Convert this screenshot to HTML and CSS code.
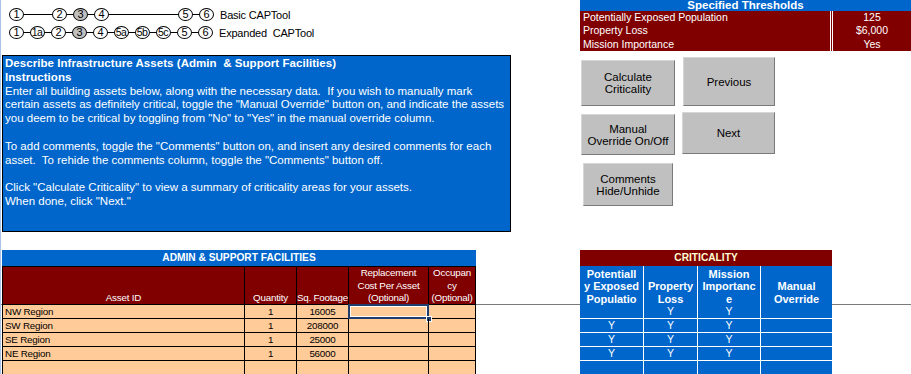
FILE: index.html
```html
<!DOCTYPE html>
<html>
<head>
<meta charset="utf-8">
<link rel="stylesheet" href="styles.css">
</head>
<body>
<div class="page">
  <div class="freeze-line"></div>
  <div class="top">
    <div class="left">
      <div class="steps">
        <div class="step-row">
          <span class="circ">1</span><span class="conn w28"></span>
          <span class="circ">2</span><span class="conn"></span>
          <span class="circ cur">3</span><span class="conn"></span>
          <span class="circ">4</span><span class="conn w69"></span>
          <span class="circ">5</span><span class="conn"></span>
          <span class="circ">6</span>
          <span class="step-label">Basic CAPTool</span>
        </div>
        <div class="step-row">
          <span class="circ">1</span><span class="conn"></span>
          <span class="circ two">1a</span><span class="conn"></span>
          <span class="circ">2</span><span class="conn"></span>
          <span class="circ cur">3</span><span class="conn"></span>
          <span class="circ">4</span><span class="conn"></span>
          <span class="circ two">5a</span><span class="conn"></span>
          <span class="circ two">5b</span><span class="conn"></span>
          <span class="circ two">5c</span><span class="conn"></span>
          <span class="circ">5</span><span class="conn"></span>
          <span class="circ">6</span>
          <span class="step-label">Expanded&nbsp; CAPTool</span>
        </div>
      </div>
      <div class="instructions">
        <div class="ins-title">Describe Infrastructure Assets (Admin&nbsp; &amp; Support Facilities)</div>
        <div class="ins-title">Instructions</div>
        <p>Enter all building assets below, along with the necessary data.&nbsp; If you wish to manually mark<br>certain assets as definitely critical, toggle the "Manual Override" button on, and indicate the assets<br>you deem to be critical by toggling from "No" to "Yes" in the manual override column.</p>
        <p>To add comments, toggle the "Comments" button on, and insert any desired comments for each<br>asset.&nbsp; To rehide the comments column, toggle the "Comments" button off.</p>
        <p>Click "Calculate Criticality" to view a summary of criticality areas for your assets.<br>When done, click "Next."</p>
      </div>
    </div>
    <div class="right">
      <div class="thresholds">
        <div class="thr-title">Specified Thresholds</div>
        <div class="thr-body">
          <div class="thr-row"><span class="thr-label">Potentially Exposed Population</span><span class="thr-val">125</span></div>
          <div class="thr-row"><span class="thr-label">Property Loss</span><span class="thr-val">$6,000</span></div>
          <div class="thr-row"><span class="thr-label">Mission Importance</span><span class="thr-val">Yes</span></div>
        </div>
      </div>
      <div class="btns">
        <div class="btn-col col1">
          <div class="btn b-calc">Calculate<br>Criticality</div>
          <div class="btn b-manual">Manual<br>Override On/Off</div>
          <div class="btn b-comments">Comments<br>Hide/Unhide</div>
        </div>
        <div class="btn-col col2">
          <div class="btn b-prev">Previous</div>
          <div class="btn b-next">Next</div>
        </div>
      </div>
    </div>
  </div>

  <div class="bottom">
    <div class="assets">
      <div class="a-title">ADMIN &amp; SUPPORT FACILITIES</div>
      <div class="a-row a-head">
        <div class="a-cell">Asset ID</div>
        <div class="a-cell">Quantity</div>
        <div class="a-cell">Sq. Footage</div>
        <div class="a-cell sel-head">Replacement<br>Cost Per Asset<br>(Optional)</div>
        <div class="a-cell">Occupan<br>cy<br>(Optional)</div>
      </div>
      <div class="a-row">
        <div class="a-cell name">NW Region</div><div class="a-cell">1</div><div class="a-cell">16005</div>
        <div class="a-cell selected"><span class="sel-box"></span><span class="sel-handle"></span></div><div class="a-cell"></div>
      </div>
      <div class="a-row">
        <div class="a-cell name">SW Region</div><div class="a-cell">1</div><div class="a-cell">208000</div><div class="a-cell"></div><div class="a-cell"></div>
      </div>
      <div class="a-row">
        <div class="a-cell name">SE Region</div><div class="a-cell">1</div><div class="a-cell">25000</div><div class="a-cell"></div><div class="a-cell"></div>
      </div>
      <div class="a-row">
        <div class="a-cell name">NE Region</div><div class="a-cell">1</div><div class="a-cell">56000</div><div class="a-cell"></div><div class="a-cell"></div>
      </div>
      <div class="a-row">
        <div class="a-cell name"></div><div class="a-cell"></div><div class="a-cell"></div><div class="a-cell"></div><div class="a-cell"></div>
      </div>
    </div>

    <div class="crit">
      <div class="c-title">CRITICALITY</div>
      <div class="c-row c-head">
        <div class="c-cell">Potentiall<br>y Exposed<br>Populatio</div>
        <div class="c-cell">Property<br>Loss</div>
        <div class="c-cell">Mission<br>Importanc<br>e</div>
        <div class="c-cell">Manual<br>Override</div>
      </div>
      <div class="c-row"><div class="c-cell"></div><div class="c-cell">Y</div><div class="c-cell">Y</div><div class="c-cell"></div></div>
      <div class="c-row"><div class="c-cell">Y</div><div class="c-cell">Y</div><div class="c-cell">Y</div><div class="c-cell"></div></div>
      <div class="c-row"><div class="c-cell">Y</div><div class="c-cell">Y</div><div class="c-cell">Y</div><div class="c-cell"></div></div>
      <div class="c-row"><div class="c-cell">Y</div><div class="c-cell">Y</div><div class="c-cell">Y</div><div class="c-cell"></div></div>
      <div class="c-row"><div class="c-cell"></div><div class="c-cell"></div><div class="c-cell"></div><div class="c-cell"></div></div>
    </div>
  </div>
</div>
</body>
</html>
```
FILE: styles.css
```css
* { box-sizing: border-box; }
html, body { margin: 0; padding: 0; background: #fff; }
body {
  font-family: "Liberation Sans", Arial, sans-serif;
  color: #000;
  overflow: hidden;
  height: 374px;
}
.page {
  position: relative;
  height: 374px;
  border-left: 1px solid #a9c4e8;
  padding-left: 1px;
}
.freeze-line {
  position: absolute;
  left: 0; right: 0; top: 304px;
  height: 1px;
  background: #7a7a7a;
  z-index: 0;
}
.top { display: flex; height: 232px; }
.left { width: 578px; }
.right { width: 331px; }

/* steps */
.steps { height: 55px; padding-top: 8px; padding-left: 7px; display: flex; flex-direction: column; gap: 5px; }
.step-row { display: flex; align-items: center; height: 13px; }
.circ {
  width: 15px; height: 13px;
  border: 1px solid #000; border-radius: 50%;
  background: #fff;
  font-size: 11px; line-height: 11px;
  display: flex; align-items: center; justify-content: center;
}
.circ.two { font-size: 10.5px; letter-spacing: -0.6px; padding-right: 1px; }
.circ.cur { background: #c0c0c0; }
.conn { width: 6px; height: 1px; background: #000; }
.conn.w28 { width: 28px; }
.conn.w69 { width: 69px; }
.step-label { margin-left: 6px; font-size: 11px; letter-spacing: -0.2px; white-space: nowrap; }

/* instructions */
.instructions {
  width: 509px; height: 177px;
  background: #0066cc;
  border: 1px solid #000;
  color: #fff;
  padding: 1px 2px;
  font-size: 11.5px;
  line-height: 13.8px;
  white-space: nowrap;
}
.ins-title { font-weight: bold; letter-spacing: 0.05px; }
.instructions p { margin: 0 0 13.8px 0; }

/* thresholds */
.thr-title {
  height: 11px; background: #0066cc; color: #fff;
  font-weight: bold; font-size: 11.5px; line-height: 11px;
  text-align: center;
}
.thr-body { background: #800000; color: #fff; height: 40px; }
.thr-row { display: flex; height: 13.33px; font-size: 10.5px; line-height: 13px; }
.thr-label { width: 250px; padding-left: 3px; }
.thr-val { flex: 1; text-align: center; border-left: 3px double #fff; }

/* buttons */
.btns { display: flex; padding-top: 6px; padding-left: 1px; }
.btn-col { display: flex; flex-direction: column; }
.col1 { padding-top: 3px; width: 94px; }
.col2 { margin-left: 8px; }
.btn {
  background: #c0c0c0;
  border-top: 1px solid #d6d6d6;
  border-left: 1px solid #d6d6d6;
  border-right: 1px solid #7a7a7a;
  border-bottom: 1px solid #7a7a7a;
  font-size: 11.5px; line-height: 12px;
  text-align: center;
  display: flex; align-items: center; justify-content: center;
  color: #000;
}
.b-calc { width: 94px; height: 46px; margin-bottom: 8px; }
.b-manual { width: 94px; height: 41px; margin-bottom: 8px; }
.b-comments { width: 90px; height: 43px; margin-left: 2px; }
.b-prev { width: 92px; height: 49px; margin-bottom: 6px; }
.b-next { width: 93px; height: 42px; margin-left: -1px; }

/* bottom tables */
.bottom { display: flex; margin-top: 18px; position: relative; z-index: 1; }
.assets { width: 474px; position: relative; }
.a-title {
  height: 17px; background: #0066cc; color: #fff;
  border-bottom: 1px solid #000;
  font-weight: bold; font-size: 10.2px; line-height: 16px;
  text-align: center;
}
.a-row {
  display: grid;
  grid-template-columns: 242px 52px 52px 80px 47px;
  height: 14px;
  border-left: 1px solid #000;
  border-bottom: 1px solid #000;
  background: #ffcc99;
  font-size: 9.8px; line-height: 13px;
  letter-spacing: -0.2px;
}
.a-cell { border-right: 1px solid #000; text-align: center; position: relative; white-space: nowrap; }
.a-cell.name { text-align: left; padding-left: 2px; }
.a-head { height: 38px; background: #800000; color: #fff; line-height: 12.5px; }
.a-head .a-cell { display: flex; flex-direction: column; justify-content: flex-end; align-items: center; }
.a-head .sel-head { box-shadow: inset 0 -1px 0 #9fe3ef; }
.sel-box {
  position: absolute; left: -1px; top: -1px; right: -1px; bottom: -1px;
  border: 2px solid #1f3e6b;
  box-shadow: inset 0 0 0 1px #fff;
}
.sel-handle {
  position: absolute; right: -4px; bottom: -4px;
  width: 6px; height: 6px;
  background: #1f3e6b; border: 1px solid #fff;
}

.crit { width: 252px; margin-left: 104px; }
.c-title {
  height: 16px; background: #800000; color: #ffffd0;
  font-weight: bold; font-size: 10.2px; line-height: 16px;
  text-align: center;
}
.c-row {
  display: grid;
  grid-template-columns: 64px 54px 63px 71px;
  height: 14px;
  background: #0066cc; color: #fff;
  border-bottom: 1px solid #fff;
  font-size: 10.5px; line-height: 13px;
}
.c-cell { border-right: 1px solid #fff; text-align: center; }
.c-cell:last-child { border-right: 0; }
.c-head { height: 39px; border-bottom: 0; font-weight: bold; font-size: 11px; line-height: 12.5px; }
.c-head .c-cell { display: flex; flex-direction: column; justify-content: flex-end; align-items: center; white-space: nowrap; }
```
